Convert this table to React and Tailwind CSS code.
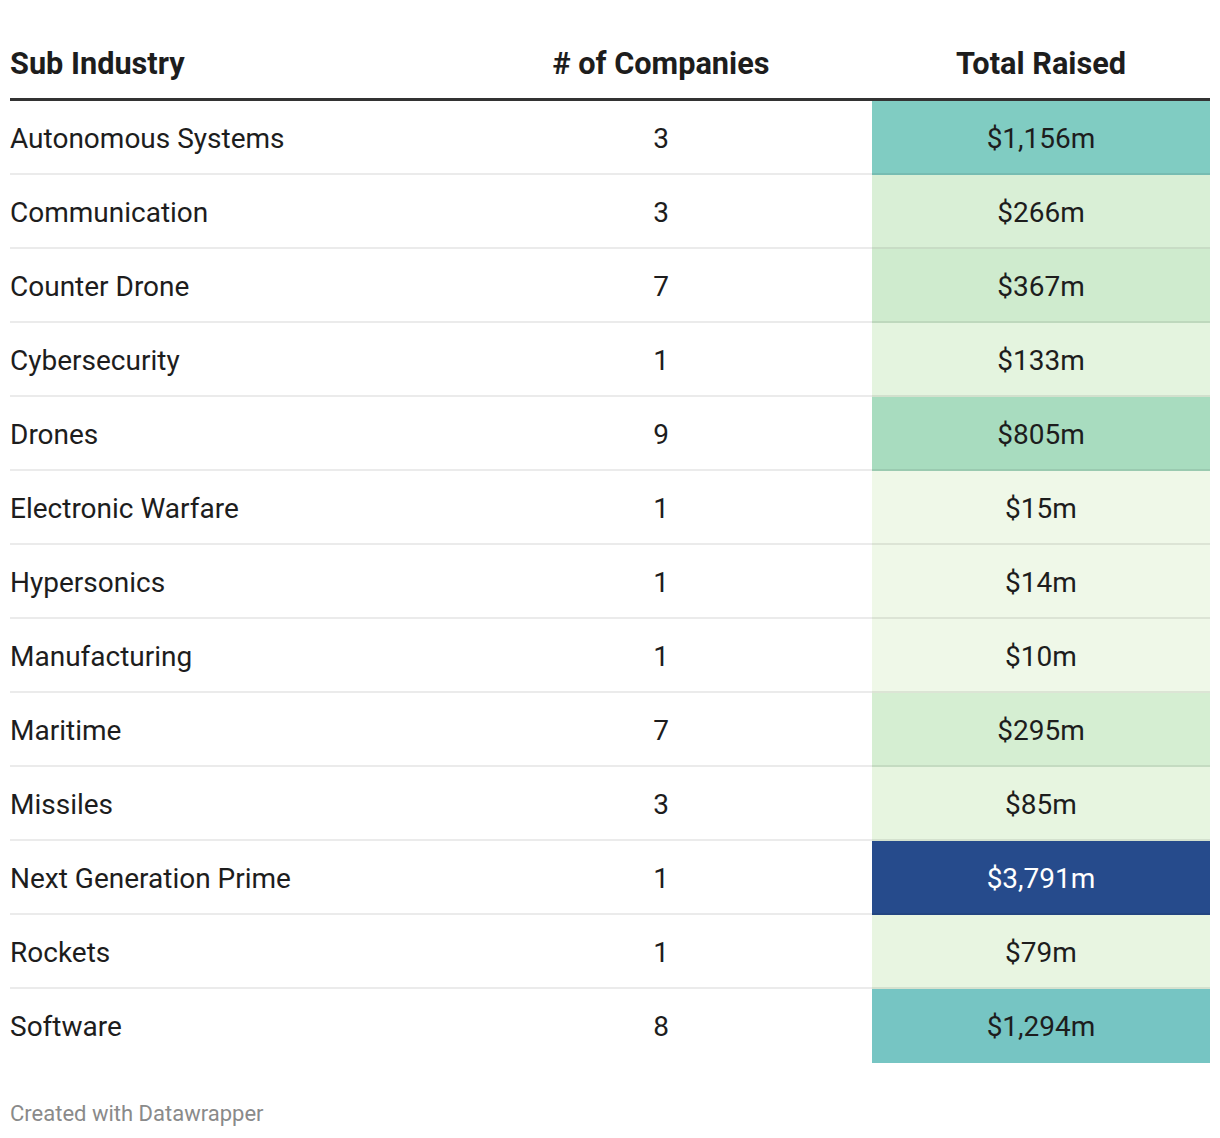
const rows = [
  { name: "Autonomous Systems", count: 3, total: "$1,156m", bg: "bg-[#80ccc2]" },
  { name: "Communication", count: 3, total: "$266m", bg: "bg-[#d9efd6]" },
  { name: "Counter Drone", count: 7, total: "$367m", bg: "bg-[#cfebce]" },
  { name: "Cybersecurity", count: 1, total: "$133m", bg: "bg-[#e4f4df]" },
  { name: "Drones", count: 9, total: "$805m", bg: "bg-[#a8dcbf]" },
  { name: "Electronic Warfare", count: 1, total: "$15m", bg: "bg-[#eff8e8]" },
  { name: "Hypersonics", count: 1, total: "$14m", bg: "bg-[#eff8e8]" },
  { name: "Manufacturing", count: 1, total: "$10m", bg: "bg-[#eff8e8]" },
  { name: "Maritime", count: 7, total: "$295m", bg: "bg-[#d5eed2]" },
  { name: "Missiles", count: 3, total: "$85m", bg: "bg-[#e7f5e0]" },
  { name: "Next Generation Prime", count: 1, total: "$3,791m", bg: "bg-[#264b8c]", light: true },
  { name: "Rockets", count: 1, total: "$79m", bg: "bg-[#e8f5e1]" },
  { name: "Software", count: 8, total: "$1,294m", bg: "bg-[#76c5c3]" },
];

export default function App() {
  return (
    <div className="w-[1220px] h-[1138px] bg-white pl-[10px] pr-[10px] text-[#1d1d1d] font-['Roboto',sans-serif]">
      <div className="grid grid-cols-[440px_422px_338px] h-[98px] items-end pb-[18px] text-[30.7px] font-bold leading-none">
        <div>Sub Industry</div>
        <div className="text-center">#&nbsp;of Companies</div>
        <div className="text-center">Total Raised</div>
      </div>
      <div className="h-[3px] bg-[#333333]" />
      {rows.map((r, i) => {
        const line = i === rows.length - 1 ? " border-b-2 border-transparent" : " border-b-2 border-black/[0.08]";
        return (
          <div key={r.name} className="grid grid-cols-[440px_422px_338px] h-[74px] text-[28px]">
            <div className={"flex items-center pt-[3px]" + line}>{r.name}</div>
            <div className={"flex items-center justify-center pt-[3px]" + line}>{r.count}</div>
            <div
              className={
                "flex items-center justify-center pt-[3px] " +
                r.bg +
                (r.light ? " text-white" : "") +
                line
              }
            >
              {r.total}
            </div>
          </div>
        );
      })}
      <div className="pt-[38px] text-[22px] leading-[26px] text-[#8a8a8a]">Created with Datawrapper</div>
    </div>
  );
}
